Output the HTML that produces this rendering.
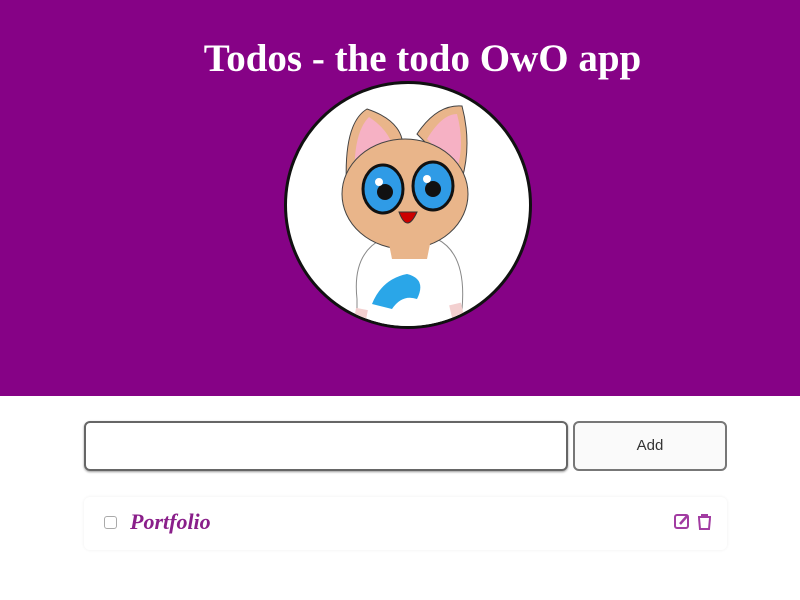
<!DOCTYPE html>
<html><head><style>
body{margin:0;width:800px;height:600px;background:#fff;overflow:hidden;font-family:"Liberation Sans",sans-serif}
.hdr{position:absolute;left:0;top:0;width:800px;height:396px;background:#860286}
h1{position:absolute;left:0;width:845px;top:36px;margin:0;text-align:center;font:bold 39px "Liberation Serif",serif;color:#fff}
.circ{position:absolute;left:284px;top:81px;width:242px;height:242px;border-radius:50%;background:#fff;border:3px solid #111;overflow:hidden}
.inp{position:absolute;left:84px;top:421px;width:480px;height:46px;border:2px solid #666;border-radius:6px;box-shadow:0 1px 2px #999}
.btn{position:absolute;left:573px;top:421px;width:150px;height:46px;border:2px solid #777;border-radius:6px;background:#fafafa;text-align:center;line-height:46px;font-size:15px;color:#333}
.card{position:absolute;left:84px;top:497px;width:643px;height:53px;border-radius:6px;box-shadow:0 0 3px #eee}
.cb{position:absolute;left:104px;top:516px;width:11px;height:11px;border:1px solid #aaa;border-radius:3px}
.t{position:absolute;left:130px;top:509px;font:italic bold 22px "URW Chancery L","Liberation Serif",cursive;color:#8a1f8a}
</style></head><body>
<div class="hdr"></div>
<h1>Todos - the todo OwO app</h1>
<div class="circ">
<svg width="242" height="242" viewBox="0 0 242 242">
<path d="M70 215 Q65 170 95 155 L150 155 Q180 170 175 225 L175 250 L70 250Z" fill="#fff" stroke="#888"/>
<path d="M75 225 L70 250 M168 220 L175 250" stroke="#f3d0d0" stroke-width="12"/>
<path d="M60 110 Q55 40 80 25 Q110 35 115 55Z" fill="#e9b58a" stroke="#444"/>
<path d="M68 100 Q65 50 82 33 Q100 45 105 60Z" fill="#f6b1c4"/>
<path d="M130 50 Q150 20 175 22 Q185 60 175 95Z" fill="#e9b58a" stroke="#444"/>
<path d="M140 55 Q155 30 170 30 Q178 60 170 85Z" fill="#f6b1c4"/>
<ellipse cx="118" cy="110" rx="63" ry="55" fill="#e9b58a" stroke="#444"/>
<path d="M100 150 L145 150 L140 175 L105 175Z" fill="#e9b58a"/>
<ellipse cx="96" cy="105" rx="20" ry="24" fill="#2f9be6" stroke="#111" stroke-width="3"/>
<ellipse cx="146" cy="102" rx="20" ry="24" fill="#2f9be6" stroke="#111" stroke-width="3"/>
<circle cx="98" cy="108" r="8" fill="#111"/><circle cx="146" cy="105" r="8" fill="#111"/>
<circle cx="92" cy="98" r="4" fill="#fff"/><circle cx="140" cy="95" r="4" fill="#fff"/>
<path d="M112 128 Q120 150 130 128Z" fill="#c00" stroke="#333"/>
<path d="M85 220 Q95 195 120 190 Q140 195 130 215 Q115 210 105 225Z" fill="#2aa6e8"/>
</svg></div>
<div class="inp"></div>
<div class="btn">Add</div>
<div class="card"></div>
<div class="cb"></div>
<div class="t">Portfolio</div>
<svg style="position:absolute;left:673px;top:512px" width="44" height="20" viewBox="0 0 44 20">
<rect x="2" y="3" width="13" height="13" rx="2" fill="none" stroke="#a23ca2" stroke-width="2"/>
<path d="M7 12 L15 3" stroke="#a23ca2" stroke-width="2.5"/>
<path d="M25 5 H38 M29 5 V3 H34 V5 M26 6 L27 17 H36 L37 6" fill="none" stroke="#a23ca2" stroke-width="2"/>
</svg>
</body></html>
